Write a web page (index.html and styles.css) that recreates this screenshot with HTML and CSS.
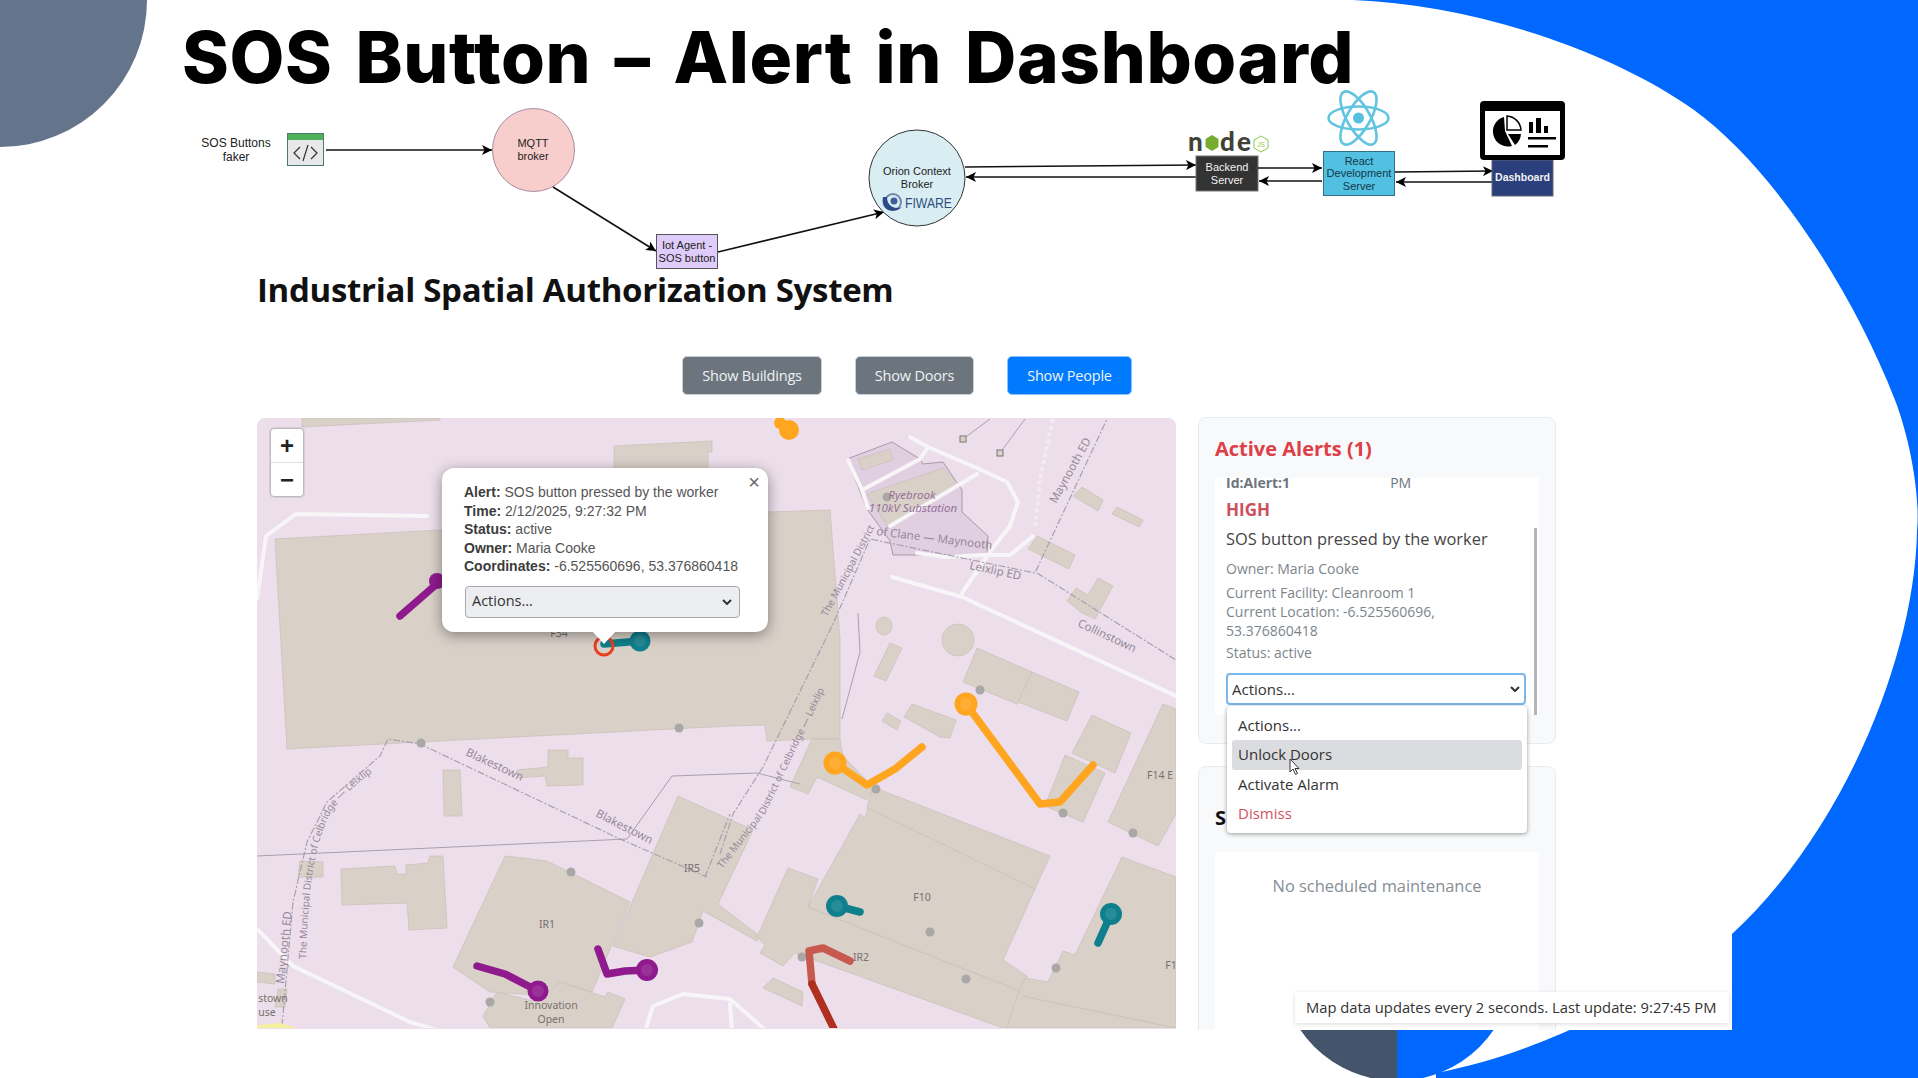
FILE: index.html
```html
<!DOCTYPE html>
<html lang="en">
<head>
    <meta charset="UTF-8">
    <title>SOS Button - Alert in Dashboard</title>
    <link rel="stylesheet" href="styles.css">
</head>
<body>

<!-- slide decoration -->
<svg class="decor" viewBox="0 0 1918 1078">
    <circle class="decor-grey" cx="0" cy="0" r="147"/>
    <path class="decor-blue" d="M1353 0 C1470 4 1610 50 1694 110 C1770 165 1850 285 1895 400 C1912 445 1920 500 1917 530 C1915 660 1840 835 1732 934 C1680 975 1560 1050 1436 1073 L1436 1078 L1918 1078 L1918 0 Z"/>
    <path class="decor-dark" d="M1397 847 A117 117 0 0 0 1397 1081 Z"/>
    <path class="decor-blue" d="M1397 847 A117 117 0 0 1 1397 1081 Z"/>
</svg>

<div class="slide">
    <h1 class="slide-title">SOS Button – Alert in Dashboard</h1>

    <!-- architecture diagram, in page coordinates -->
    <svg class="diagram" viewBox="190 90 1390 182">
        <defs>
            <marker id="head" markerUnits="userSpaceOnUse" markerWidth="11" markerHeight="10" refX="10" refY="5" orient="auto">
                <path d="M0 0 L10 5 L0 10 L2.5 5 Z"/>
            </marker>
        </defs>

        <text class="d-label d-big" x="236" y="147">SOS Buttons</text>
        <text class="d-label d-big" x="236" y="161">faker</text>

        <rect class="code-body" x="287.5" y="133.5" width="36" height="32"/>
        <rect class="code-head" x="288" y="134" width="35" height="6"/>
        <path class="code-mark" d="M300 147 L294 153 L300 159 M311 147 L317 153 L311 159 M308 145 L303 161"/>

        <line class="arrow" x1="326" y1="150" x2="492" y2="150"/>
        <ellipse class="n-mqtt" cx="533.5" cy="150" rx="41" ry="41.5"/>
        <text class="d-label" x="533" y="147">MQTT</text>
        <text class="d-label" x="533" y="160">broker</text>

        <line class="arrow" x1="553" y1="187" x2="656" y2="251"/>
        <rect class="n-iot" x="656.5" y="234.5" width="61" height="34"/>
        <text class="d-label" x="687" y="249">Iot Agent -</text>
        <text class="d-label" x="687" y="262">SOS button</text>

        <line class="arrow" x1="718" y1="252" x2="884" y2="212"/>
        <circle class="n-orion" cx="917" cy="178" r="48"/>
        <text class="d-label" x="917" y="175">Orion Context</text>
        <text class="d-label" x="917" y="188">Broker</text>
        <circle class="fw-ring" cx="893" cy="202" r="8"/>
        <path class="fw-swirl" d="M883 197 C880 210 893 215 902 207 C893 210 887 205 887 197 Z"/>
        <circle class="fw-core" cx="894" cy="201" r="3.5"/>
        <text class="fw-text" x="905" y="208" textLength="47" lengthAdjust="spacingAndGlyphs">FIWARE</text>

        <line class="arrow" x1="965" y1="167" x2="1196" y2="165"/>
        <line class="arrow" x1="1196" y1="177" x2="966" y2="177"/>

        <text class="node-text" x="1188" y="151">n</text>
        <polygon class="node-hex" points="1212,135 1218.5,139 1218.5,147 1212,151 1205.5,147 1205.5,139"/>
        <text class="node-text" x="1220" y="151">d</text>
        <text class="node-text" x="1237" y="151">e</text>
        <polygon class="node-js" points="1261,136 1268,140 1268,148 1261,152 1254,148 1254,140"/>
        <text class="node-js-text" x="1261" y="147">JS</text>

        <rect class="n-backend" x="1196" y="156" width="62" height="35"/>
        <text class="d-label d-white" x="1227" y="171">Backend</text>
        <text class="d-label d-white" x="1227" y="184">Server</text>

        <line class="arrow" x1="1258" y1="168" x2="1322" y2="168"/>
        <line class="arrow" x1="1322" y1="181" x2="1259" y2="181"/>

        <g class="react-logo">
            <ellipse cx="1358.5" cy="118" rx="30" ry="11.5"/>
            <ellipse cx="1358.5" cy="118" rx="30" ry="11.5" transform="rotate(60 1358.5 118)"/>
            <ellipse cx="1358.5" cy="118" rx="30" ry="11.5" transform="rotate(120 1358.5 118)"/>
        </g>
        <circle class="react-dot" cx="1358.5" cy="118" r="5.5"/>

        <rect class="n-react" x="1323.5" y="151.5" width="71" height="44"/>
        <text class="d-label d-dark" x="1359" y="165">React</text>
        <text class="d-label d-dark" x="1359" y="177">Development</text>
        <text class="d-label d-dark" x="1359" y="190">Server</text>

        <line class="arrow" x1="1395" y1="172" x2="1493" y2="171"/>
        <line class="arrow" x1="1492" y1="182" x2="1396" y2="182"/>

        <rect class="n-dash" x="1492" y="160" width="61" height="36"/>
        <text class="d-label d-white d-bold" x="1522.5" y="181">Dashboard</text>

        <rect class="dash-frame" x="1480" y="101" width="85" height="59" rx="4"/>
        <rect class="dash-screen" x="1485" y="111" width="75" height="44"/>
        <path class="dash-ink" d="M1504 117 A15 15 0 1 0 1512 146 L1505 131 Z"/>
        <path class="dash-slice" d="M1507 116 A15 15 0 0 1 1521 130 L1507 130 Z"/>
        <path class="dash-ink" d="M1508 134 L1521 134 A15 15 0 0 1 1515 145 Z"/>
        <rect class="dash-ink" x="1529" y="122" width="4" height="11"/>
        <rect class="dash-ink" x="1536" y="118" width="5" height="15"/>
        <rect class="dash-ink" x="1544" y="126" width="4" height="7"/>
        <rect class="dash-ink" x="1528" y="137" width="28" height="2.5"/>
        <rect class="dash-ink" x="1528" y="145" width="20" height="2.5"/>
    </svg>

    <div class="app">
        <h2 class="app-title">Industrial Spatial Authorization System</h2>

        <div class="toolbar">
            <button class="btn btn-grey">Show Buildings</button>
            <button class="btn btn-grey">Show Doors</button>
            <button class="btn btn-blue">Show People</button>
        </div>

        <div class="main">
            <div class="map">
                <!-- map tiles, in page coordinates -->
                <svg class="map-svg" viewBox="257 419 919 610">
                    <defs>
                        <path id="lbl-cel1" d="M306 960 C308 900 312 850 330 815 C345 790 375 772 394 758"/>
                        <path id="lbl-cel2" d="M722 870 L765 815 L832 675"/>
                    </defs>

                    <!-- buildings -->
                    <polygon class="b" points="275,540 768,513 830,511 840,640 840,740 810,740 767,742 765,726 730,727 420,743 287,750"/>
                    <polygon class="b" points="302,428 440,421 440,419 302,419"/>
                    <polygon class="b" points="614,447 712,442 712,453 708,453 708,475 614,475"/>
                    <polygon class="b" points="790,788 812,740 840,740 843,757 873,788 867,801 817,778 808,795"/>
                    <polygon class="b" points="873,788 1050,857 1035,890 867,809"/>
                    <polygon class="b" points="860,815 865,819 868,809 1035,890 1003,961 1027,977 1022,993 808,908"/>
                    <polygon class="b" points="788,869 818,880 808,908 1022,993 1015,1029 1003,1029 795,954 783,967 760,954 765,946 757,938"/>
                    <polygon class="b" points="1122,858 1176,878 1176,1029 1007,1029 1015,1003 1025,979 1048,983 1063,952 1075,956"/>
                    <polygon class="b" points="763,989 773,979 803,993 802,1007"/>
                    <polygon class="b" points="1073,497 1082,488 1103,501 1098,512"/>
                    <polygon class="b" points="1112,515 1117,508 1143,521 1139,528"/>
                    <polygon class="b" points="1028,550 1037,537 1075,556 1069,570"/>
                    <polygon class="b" points="1067,602 1076,589 1088,596 1098,579 1113,587 1095,620 1082,614"/>
                    <ellipse class="b" cx="884" cy="627" rx="8" ry="9"/>
                    <circle class="b" cx="958" cy="641" r="16"/>
                    <polygon class="b" points="874,677 890,644 902,649 886,682"/>
                    <polygon class="b" points="882,722 887,714 901,722 897,731"/>
                    <polygon class="b" points="904,718 912,705 956,721 950,739 940,738"/>
                    <polygon class="b" points="963,683 977,649 1032,673 1017,705"/>
                    <polygon class="b" points="1032,673 1079,693 1067,722 1018,703"/>
                    <polygon class="b" points="1072,754 1092,716 1131,734 1115,774"/>
                    <polygon class="b" points="1045,807 1065,756 1105,774 1083,823"/>
                    <polygon class="b" points="1108,823 1163,705 1176,710 1176,815 1158,847"/>
                    <polygon class="b" points="443,771 460,771 462,817 444,817"/>
                    <polygon class="b" points="517,771 548,768 548,751 568,751 568,759 583,759 583,786 547,787 545,777 518,779"/>
                    <polygon class="b" points="341,870 395,867 397,875 406,875 406,866 428,864 430,857 443,857 447,929 409,931 407,904 342,906"/>
                    <polygon class="b" points="505,857 547,862 630,903 592,993 560,983 550,997 490,993 453,968"/>
                    <polygon class="b" points="483,1017 497,993 537,1003 560,983 605,998 608,993 625,1000 612,1029 490,1029"/>
                    <polygon class="b" points="678,797 753,831 718,905 757,935 757,942 703,912 692,943 650,958 613,947"/>
                    <polygon class="b" points="257,973 275,975 275,985 257,983"/>
                    <polygon class="b" points="278,990 287,990 285,1008 275,1008"/>
                    <polygon class="b" points="300,862 323,863 323,878 298,878"/>
                    <polyline class="b-line" points="1022,997 1176,1029"/>

                    <polygon class="sub" points="847,460 892,443 920,460 923,465 943,463 962,491 962,513 988,537 987,556 893,556 890,542 867,510"/>
                    <polygon class="b" points="858,460 890,450 893,461 862,471"/>
                    <polygon class="b" points="867,495 943,469 958,485 887,527"/>

                    <g class="road">
                        <polyline points="910,438 928,448 977,469 1007,483 1018,503 1010,527 992,550 962,594"/>
                        <polyline points="848,461 862,491 868,509"/>
                        <polyline points="862,491 920,460 928,448"/>
                        <polyline points="890,527 977,475"/>
                        <polyline points="917,554 945,558 983,556 1010,556 1033,537"/>
                        <polyline points="892,578 962,598 1176,697"/>
                        <polyline points="427,517 296,515 266,537 257,600"/>
                        <polyline points="257,930 293,967 410,1023 440,1032"/>
                        <polyline points="645,1032 653,1007 683,995 730,1000 763,1029"/>
                        <polyline points="730,1005 732,1032"/>
                    </g>
                    <polyline class="road-faint" points="1053,420 1040,480 1035,530"/>

                    <g class="line-dash">
                        <polyline points="282,1027 293,903 307,843 327,803 380,757 388,740 420,745 620,840 707,878"/>
                        <polyline points="720,855 733,815 763,768 833,625 870,540 1035,574 1107,420"/>
                        <polyline points="1037,574 1176,661"/>
                        <polyline points="705,878 730,815"/>
                    </g>
                    <g class="line-thin">
                        <polyline points="257,857 627,840 672,777 757,774 800,785"/>
                        <polyline points="990,420 963,440"/>
                        <polyline points="1025,420 1000,454"/>
                        <polyline points="858,614 860,653 842,720"/>
                    </g>
                    <rect class="pylon" x="960" y="437" width="6" height="6"/>
                    <rect class="pylon" x="997" y="451" width="6" height="6"/>

                    <g class="dot">
                        <circle cx="421" cy="744" r="4.5"/>
                        <circle cx="679" cy="729" r="4.5"/>
                        <circle cx="571" cy="873" r="4.5"/>
                        <circle cx="699" cy="924" r="4.5"/>
                        <circle cx="490" cy="1003" r="4.5"/>
                        <circle cx="887" cy="498" r="4.5"/>
                        <circle cx="980" cy="691" r="4.5"/>
                        <circle cx="876" cy="790" r="4.5"/>
                        <circle cx="1063" cy="814" r="4.5"/>
                        <circle cx="1133" cy="834" r="4.5"/>
                        <circle cx="930" cy="933" r="4.5"/>
                        <circle cx="802" cy="958" r="4.5"/>
                        <circle cx="966" cy="980" r="4.5"/>
                        <circle cx="1056" cy="969" r="4.5"/>
                    </g>

                    <text class="m-text" x="559" y="638">F34</text>
                    <text class="m-area" transform="translate(465 756) rotate(25)">Blakestown</text>
                    <text class="m-area" transform="translate(595 817) rotate(27)">Blakestown</text>
                    <text class="m-bound"><textPath href="#lbl-cel1">The Municipal District of Celbridge — Leixlip</textPath></text>
                    <text class="m-bound"><textPath href="#lbl-cel2">The Municipal District of Celbridge — Leixlip</textPath></text>
                    <text class="m-bound" transform="translate(827 618) rotate(-62)">The Municipal District</text>
                    <text class="m-area" transform="translate(876 536) rotate(7)">of Clane — Maynooth</text>
                    <text class="m-area" transform="translate(284 985) rotate(-84)">Maynooth ED</text>
                    <text class="m-area" transform="translate(1056 505) rotate(-61)">Maynooth ED</text>
                    <text class="m-area" transform="translate(969 570) rotate(12)">Leixlip ED</text>
                    <text class="m-area" transform="translate(1077 627) rotate(25)">Collinstown</text>
                    <text class="m-sub" x="912" y="500">Ryebrook</text>
                    <text class="m-sub" x="913" y="513">110kV Substation</text>
                    <text class="m-text" x="547" y="929">IR1</text>
                    <text class="m-text" x="692" y="873">IR5</text>
                    <text class="m-text" x="922" y="902">F10</text>
                    <text class="m-text" x="861" y="962">IR2</text>
                    <text class="m-text" x="1160" y="780">F14 E</text>
                    <text class="m-text" x="1171" y="970">F1</text>
                    <text class="m-text" x="551" y="1010">Innovation</text>
                    <text class="m-text" x="551" y="1024">Open</text>
                    <text class="m-text" x="273" y="1003">stown</text>
                    <text class="m-text" x="267" y="1017">use</text>

                    <!-- worker tracks -->
                    <polyline class="trk t-purple" points="400,617 439,583"/>
                    <circle class="t-purple-fill" cx="437" cy="582" r="8"/>
                    <polyline class="trk t-purple" points="477,967 505,975 538,992"/>
                    <circle class="t-purple-fill" cx="538" cy="992" r="10.5"/>
                    <polyline class="trk t-purple" points="598,950 607,975 625,972 647,971"/>
                    <circle class="t-purple-fill" cx="647" cy="971" r="11"/>

                    <circle class="t-orange-fill" cx="789" cy="431" r="10"/>
                    <circle class="t-orange-fill" cx="780" cy="424" r="6"/>
                    <polyline class="trk t-orange" points="835,764 867,786 895,770 922,748"/>
                    <circle class="t-orange-fill" cx="835" cy="764" r="11.5"/>
                    <polyline class="trk t-orange" points="966,705 1040,805 1060,803 1093,766"/>
                    <circle class="t-orange-fill" cx="966" cy="705" r="11.5"/>

                    <polyline class="trk t-teal" points="604,645 640,642"/>
                    <circle class="t-teal-fill" cx="640" cy="642" r="10.5"/>
                    <polyline class="trk t-teal" points="837,907 860,913"/>
                    <circle class="t-teal-fill" cx="837" cy="907" r="11"/>
                    <polyline class="trk t-teal" points="1111,915 1098,944"/>
                    <circle class="t-teal-fill" cx="1111" cy="915" r="11"/>

                    <g class="t-inner">
                        <circle cx="538" cy="992" r="6"/>
                        <circle cx="647" cy="971" r="6"/>
                        <circle cx="640" cy="642" r="6"/>
                        <circle cx="837" cy="907" r="6"/>
                        <circle cx="1111" cy="915" r="6"/>
                        <circle cx="835" cy="764" r="6"/>
                        <circle cx="966" cy="705" r="6"/>
                    </g>

                    <polyline class="trk t-red-soft" points="850,962 823,949 809,952 812,985"/>
                    <polyline class="trk t-red" points="812,985 835,1032"/>
                    <circle class="ring" cx="604" cy="647" r="9"/>
                    <polygon class="yellow" points="257,1026 280,1024 298,1029 257,1029"/>
                </svg>

                <div class="zoom-ctl">
                    <a class="zoom-btn">+</a>
                    <a class="zoom-btn">−</a>
                </div>

                <div class="popup">
                    <span class="popup-close">×</span>
                    <div class="popup-text">
                        <b>Alert:</b> SOS button pressed by the worker<br>
                        <b>Time:</b> 2/12/2025, 9:27:32 PM<br>
                        <b>Status:</b> active<br>
                        <b>Owner:</b> Maria Cooke<br>
                        <b>Coordinates:</b> -6.525560696, 53.376860418
                    </div>
                    <div class="popup-select">
                        <span>Actions...</span>
                        <svg class="chev" viewBox="0 0 10 6"><path d="M1 1 L5 5 L9 1"/></svg>
                    </div>
                    <div class="popup-tip"></div>
                </div>
            </div>

            <div class="side">
                <div class="card card-alerts">
                    <h3 class="card-title">Active Alerts (1)</h3>
                    <div class="alert-list">
                        <div class="alert-meta"><span>Id:Alert:1</span><span class="alert-time">PM</span></div>
                        <div class="alert-level">HIGH</div>
                        <div class="alert-msg">SOS button pressed by the worker</div>
                        <div class="alert-info owner">Owner: Maria Cooke</div>
                        <div class="alert-info place">Current Facility: Cleanroom 1<br>Current Location: -6.525560696,<br>53.376860418</div>
                        <div class="alert-info status">Status: active</div>
                        <div class="alert-select">
                            <span>Actions...</span>
                            <svg class="chev" viewBox="0 0 10 6"><path d="M1 1 L5 5 L9 1"/></svg>
                        </div>
                        <div class="thumb"></div>
                    </div>
                    <ul class="dropdown">
                        <li>Actions...</li>
                        <li class="hover">Unlock Doors</li>
                        <li>Activate Alarm</li>
                        <li class="danger">Dismiss</li>
                    </ul>
                    <svg class="cursor" viewBox="0 0 12 18"><path d="M1 1 L1 14 L4 11 L6.5 16.5 L8.5 15.5 L6 10.5 L10 10.5 Z"/></svg>
                </div>

                <div class="card card-maint">
                    <h3 class="card-title dark">S</h3>
                    <div class="maint-body">No scheduled maintenance</div>
                </div>
            </div>
        </div>

        <div class="toast">Map data updates every 2 seconds. Last update: 9:27:45 PM</div>
    </div>
</div>

</body>
</html>
```

FILE: styles.css
```css
html, body {
    margin: 0;
    padding: 0;
}
body {
    width: 1918px;
    height: 1078px;
    position: relative;
    overflow: hidden;
    background: #fff;
    font-family: "Open Sans", sans-serif;
}
.decor {
    position: absolute;
    left: 0;
    top: 0;
    width: 1918px;
    height: 1078px;
}
.decor-grey { fill: #64748a; }
.decor-blue { fill: #0068ff; }
.decor-dark { fill: #44546a; }

.slide {
    position: relative;
}
.slide-title {
    margin: 0;
    height: 90px;
    padding-left: 182px;
    box-sizing: border-box;
    font-family: Inter, sans-serif;
    font-weight: 800;
    font-size: 71px;
    line-height: 114px;
    letter-spacing: 0.6px;
    word-spacing: 7px;
    color: #000;
    white-space: nowrap;
}

/* diagram */
.diagram {
    display: block;
    margin-left: 190px;
    width: 1390px;
    height: 182px;
    font-family: "Liberation Sans", sans-serif;
}
.d-label {
    font-size: 11px;
    text-anchor: middle;
    fill: #222;
}
.d-big { font-size: 12px; }
.d-white { fill: #f2f2f2; }
.d-dark { fill: #12384a; }
.d-bold { font-weight: 700; font-size: 10.5px; }
.arrow {
    stroke: #111;
    stroke-width: 1.6;
    marker-end: url(#head);
}
.code-body { fill: #e8e8e8; stroke: #4d7a78; }
.code-head { fill: #4fb05a; }
.code-mark { fill: none; stroke: #333; stroke-width: 1.2; }
.n-mqtt { fill: #f8cecc; stroke: #a98aa0; }
.n-iot { fill: #e0ccfa; stroke: #555; }
.n-orion { fill: #d9eef3; stroke: #333; }
.fw-ring { fill: none; stroke: #6f86ad; stroke-width: 2; }
.fw-swirl { fill: #2d4a86; }
.fw-core { fill: #3f5f96; }
.fw-text { font-size: 15px; fill: #2f4e7e; }
.node-text { font-family: Lato, sans-serif; font-weight: 900; font-size: 26px; fill: #404137; }
.node-hex { fill: #76ad2f; }
.node-js { fill: none; stroke: #8cc84b; }
.node-js-text { font-size: 6.5px; text-anchor: middle; fill: #8cc84b; }
.n-backend { fill: #333; stroke: #777; }
.react-logo ellipse { fill: none; stroke: #61c4e0; stroke-width: 2.6; }
.react-dot { fill: #55c0df; }
.n-react { fill: #52c0e0; stroke: #2f6f88; }
.n-dash { fill: #2b3f7c; stroke: #667; }
.dash-frame { fill: #000; }
.dash-screen { fill: #fff; }
.dash-ink { fill: #000; }
.dash-slice { fill: #fff; stroke: #000; stroke-width: 1.5; }

/* the dashboard screenshot */
.app {
    position: relative;
    box-sizing: border-box;
    margin-left: 205px;
    width: 1527px;
    height: 758px;
    padding-left: 52px;
    background: #fff;
}
.app-title {
    margin: 0;
    height: 84px;
    font-size: 33px;
    font-weight: 700;
    line-height: 36px;
    letter-spacing: -0.3px;
    color: #111;
    white-space: nowrap;
}
.toolbar {
    display: flex;
    gap: 33px;
    width: 1300px;
    padding-left: 425px;
    box-sizing: border-box;
    margin-bottom: 22px;
}
.btn {
    height: 39px;
    border: 1px solid #c8d0d8;
    border-radius: 5px;
    color: #eef2f5;
    font-family: "Open Sans", sans-serif;
    font-size: 14.5px;
    letter-spacing: -0.2px;
    padding: 0;
}
.btn-grey { background: #6c757d; }
.btn-grey:nth-child(1) { width: 140px; }
.btn-grey:nth-child(2) { width: 119px; }
.btn-blue { background: #007bff; width: 125px; border-color: #8cc4ff; }

.main {
    display: flex;
    gap: 22px;
    height: 613px;
}

/* map */
.map {
    position: relative;
    width: 919px;
    height: 611px;
    margin-top: 1px;
    overflow: hidden;
    border-radius: 8px 8px 0 0;
    background: #ecdfeb;
}
.map-svg {
    display: block;
    width: 919px;
    height: 610px;
    font-family: "Noto Sans", sans-serif;
}
.b { fill: #d9d0c8; stroke: #cbc2bb; stroke-width: 0.8; }
.b-line { fill: none; stroke: #cbc2bb; }
.sub { fill: #e0cfe0; stroke: #a79aa6; }
.road polyline { fill: none; stroke: #f7f5f7; stroke-width: 4; stroke-linejoin: round; stroke-linecap: round; }
.road-faint { fill: none; stroke: #f7f5f7; stroke-width: 4; stroke-dasharray: 4 3; opacity: 0.6; }
.line-dash polyline { fill: none; stroke: #a89fae; stroke-width: 1.2; stroke-dasharray: 7 2 2 2; }
.line-thin polyline { fill: none; stroke: #a89fae; stroke-width: 1; }
.pylon { fill: #d9d0c8; stroke: #777; }
.dot circle { fill: #a9a8a6; }
.m-text { font-size: 10.5px; text-anchor: middle; fill: #77716f; }
.m-area { font-size: 11.5px; fill: #96889c; }
.m-bound { font-size: 10px; fill: #96889c; }
.m-sub { font-size: 11.5px; font-style: italic; text-anchor: middle; fill: #96709c; }
.trk { fill: none; stroke-width: 7.5; stroke-linecap: round; stroke-linejoin: round; }
.t-purple { stroke: #8e1a8e; }
.t-purple-fill { fill: #8e1a8e; }
.t-orange { stroke: #ffa51f; }
.t-orange-fill { fill: #ffa51f; }
.t-teal { stroke: #0e7f8c; }
.t-teal-fill { fill: #0e7f8c; }
.t-inner circle { fill: rgba(255, 255, 255, 0.1); }
.t-red-soft { stroke: #c8594f; }
.t-red { stroke: #b03020; }
.ring { fill: none; stroke: #e8401f; stroke-width: 3; }
.yellow { fill: #f5efa0; }

.zoom-ctl {
    position: absolute;
    left: 13px;
    top: 10px;
    width: 32px;
    border: 1px solid #bbb;
    border-radius: 4px;
    background: #fff;
    box-shadow: 0 0 0 1px rgba(0, 0, 0, 0.08);
}
.zoom-btn {
    display: block;
    height: 33px;
    line-height: 33px;
    text-align: center;
    font-family: "Liberation Sans", sans-serif;
    font-size: 24px;
    font-weight: 700;
    color: #222;
}
.zoom-btn:first-child {
    border-bottom: 1px solid #ddd;
}

.popup {
    position: absolute;
    left: 185px;
    top: 50px;
    width: 326px;
    height: 164px;
    box-sizing: border-box;
    padding: 15px 22px 0 22px;
    background: #fff;
    border-radius: 12px;
    box-shadow: 0 3px 14px rgba(0, 0, 0, 0.4);
    font-family: "Liberation Sans", sans-serif;
    font-size: 14px;
    line-height: 18.5px;
    color: #555;
}
.popup b {
    color: #3c3c3c;
}
.popup-text {
    white-space: nowrap;
}
.popup-close {
    position: absolute;
    right: 8px;
    top: 3px;
    font-size: 20px;
    line-height: 22px;
    color: #666;
}
.popup-select {
    display: flex;
    align-items: center;
    justify-content: space-between;
    width: 275px;
    height: 32px;
    margin: 10px 0 0 1px;
    padding: 0 7px 0 6px;
    box-sizing: border-box;
    background: #ecedf0;
    border: 1px solid #a9a9a9;
    border-radius: 4px;
    font-family: "Open Sans", sans-serif;
    font-size: 14.5px;
    color: #333;
}
.popup-tip {
    position: absolute;
    left: 150px;
    bottom: -12px;
    width: 0;
    height: 0;
    border-left: 12px solid transparent;
    border-right: 12px solid transparent;
    border-top: 13px solid #fff;
}
.chev {
    width: 10px;
    height: 6px;
}
.chev path {
    fill: none;
    stroke: #333;
    stroke-width: 2;
}

/* right column */
.side {
    width: 358px;
    height: 613px;
    overflow: hidden;
    display: flex;
    flex-direction: column;
    gap: 22px;
}
.card {
    position: relative;
    box-sizing: border-box;
    background: #f8f9fa;
    border: 1px solid #e9ecef;
    border-radius: 8px;
    padding: 0 16px;
}
.card-alerts {
    height: 327px;
    flex: none;
    z-index: 2;
}
.card-maint {
    height: 320px;
    flex: none;
}
.card-title {
    margin: 0;
    height: 60px;
    box-sizing: border-box;
    padding-top: 18px;
    font-size: 20px;
    font-weight: 700;
    line-height: 26px;
    color: #dc3f48;
    white-space: nowrap;
}
.card-title.dark {
    color: #111;
    padding-top: 38px;
    height: 85px;
}
.alert-list {
    position: relative;
    height: 237px;
    overflow: hidden;
    padding: 0 11px;
    background: #fff;
    color: #6c757d;
}
.alert-meta {
    display: flex;
    margin-top: -5px;
    font-size: 14px;
    font-weight: 700;
    line-height: 20px;
}
.alert-time {
    margin-left: 100px;
    font-weight: 400;
}
.alert-level {
    margin-top: 7px;
    font-size: 17px;
    font-weight: 700;
    line-height: 20px;
    color: #c9505c;
}
.alert-msg {
    margin-top: 7px;
    font-size: 16.4px;
    line-height: 24px;
    color: #444;
    white-space: nowrap;
}
.alert-info {
    font-size: 14px;
    line-height: 19px;
    color: #7d858c;
    white-space: nowrap;
}
.owner { margin-top: 8px; line-height: 20px; }
.place { margin-top: 4px; }
.status { margin-top: 3px; line-height: 20px; }
.alert-select {
    display: flex;
    align-items: center;
    justify-content: space-between;
    box-sizing: border-box;
    width: 300px;
    height: 32px;
    margin-top: 10px;
    padding: 0 4px;
    background: #fff;
    border: 2px solid #79b8ec;
    border-radius: 4px;
    font-size: 15px;
    color: #333;
}
.thumb {
    position: absolute;
    right: 2px;
    top: 50px;
    bottom: 0;
    width: 3px;
    background: #b5b5b5;
}
.dropdown {
    position: absolute;
    left: 28px;
    top: 288px;
    width: 300px;
    height: 127px;
    box-sizing: border-box;
    margin: 0;
    padding: 5px;
    list-style: none;
    background: #fff;
    border-radius: 4px;
    box-shadow: 0 1px 4px rgba(0, 0, 0, 0.4);
    font-size: 15px;
    line-height: 29.3px;
    color: #333;
}
.dropdown li {
    padding-left: 6px;
    border-radius: 3px;
}
.dropdown .hover {
    background: #dbdcdf;
}
.dropdown .danger {
    color: #d0525f;
}
.cursor {
    position: absolute;
    left: 90px;
    top: 340px;
    width: 12px;
    height: 18px;
}
.cursor path {
    fill: #fff;
    stroke: #333;
    stroke-width: 1;
}
.maint-body {
    height: 250px;
    padding-top: 22px;
    box-sizing: border-box;
    background: #fff;
    text-align: center;
    font-size: 16.4px;
    line-height: 24px;
    color: #868e96;
}

.toast {
    position: absolute;
    left: 1090px;
    top: 720px;
    width: 434px;
    height: 31px;
    box-sizing: border-box;
    padding-left: 11px;
    background: #fff;
    box-shadow: 0 1px 4px rgba(0, 0, 0, 0.15);
    font-size: 14.75px;
    line-height: 31px;
    color: #333;
    white-space: nowrap;
}
```
